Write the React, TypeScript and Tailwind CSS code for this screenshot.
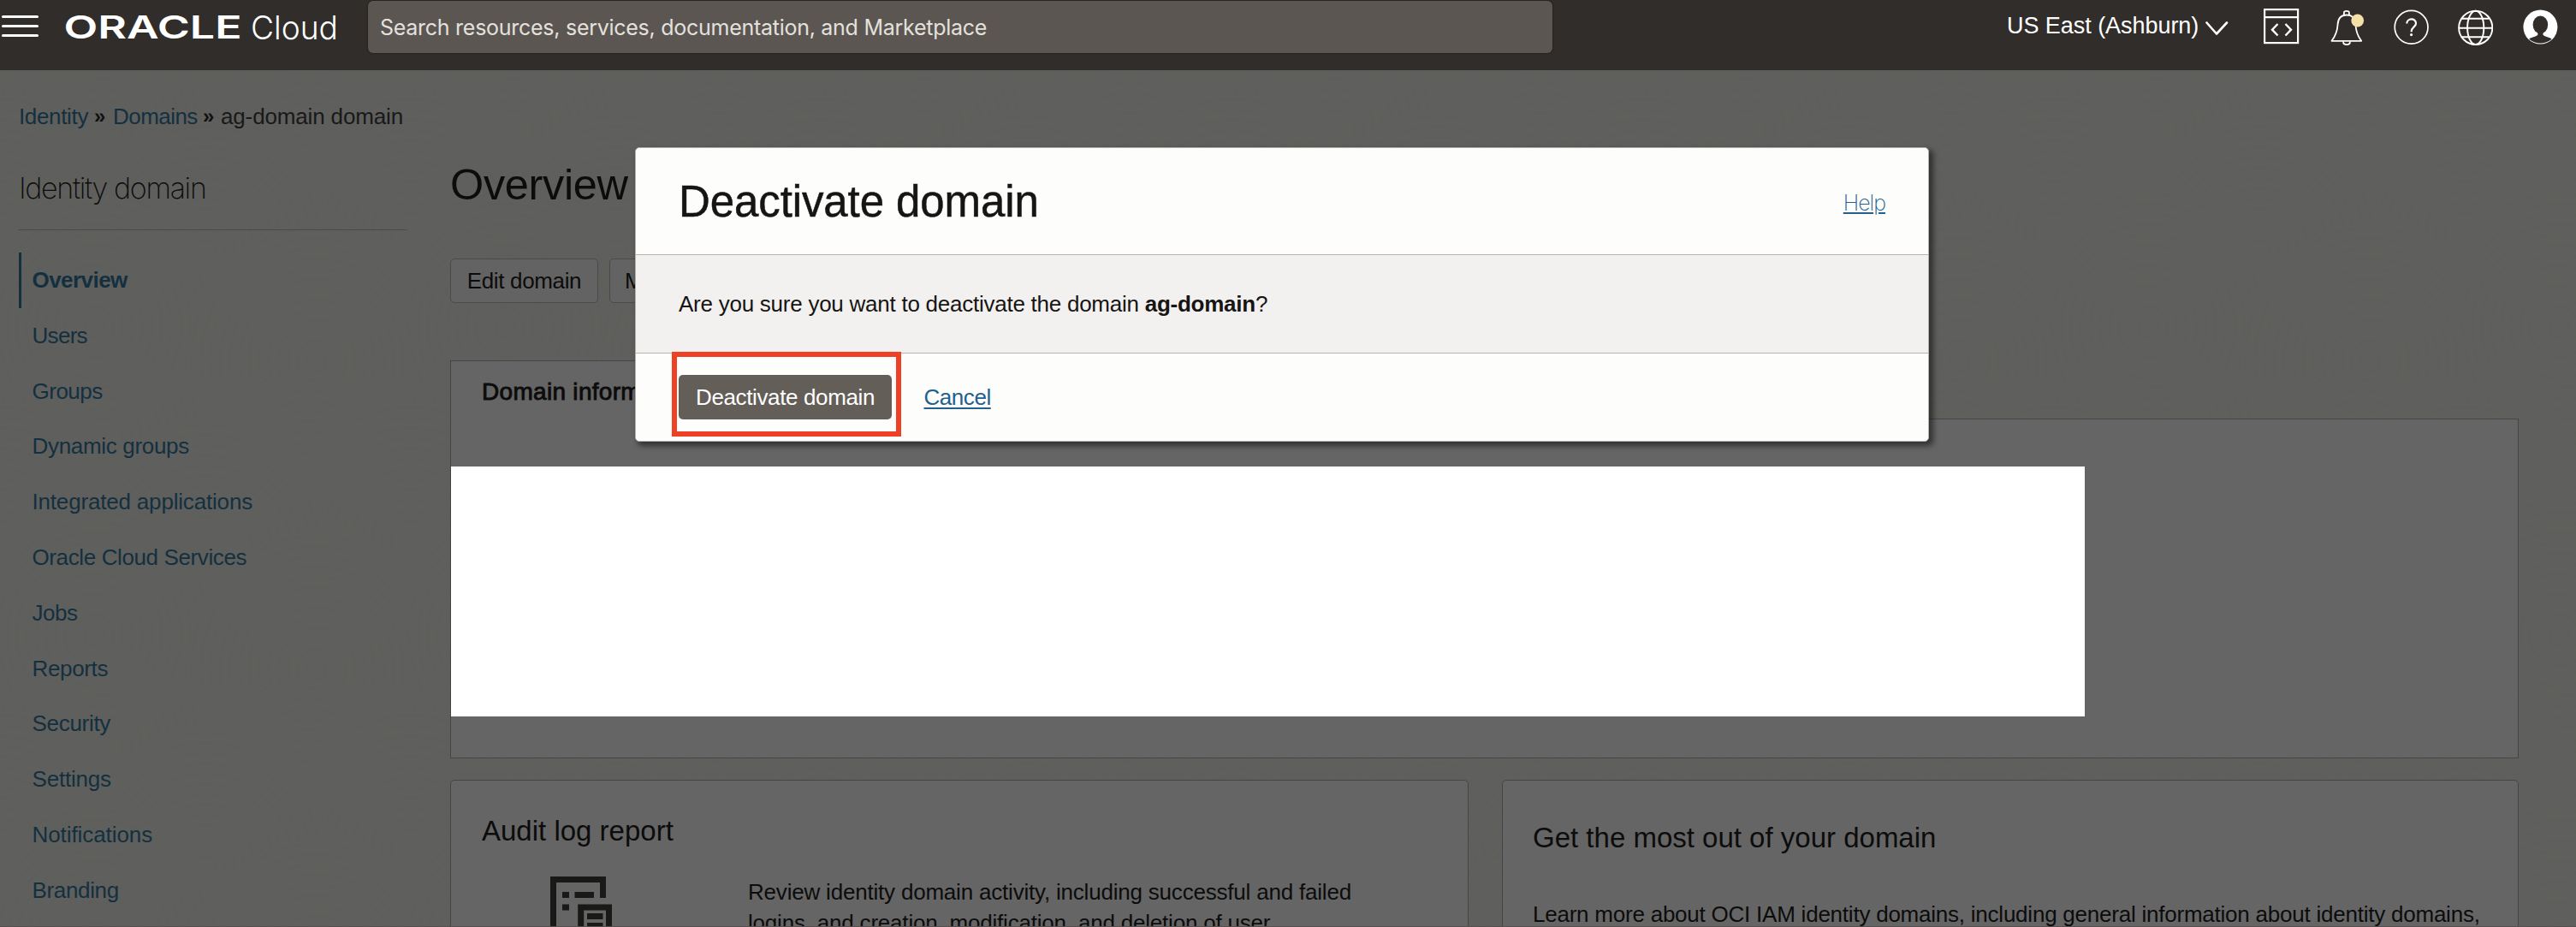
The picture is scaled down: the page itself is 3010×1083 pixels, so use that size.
import React from 'react';

const navItems: { label: string; tracking: string }[] = [
  { label: 'Users', tracking: 'tracking-[-0.7px]' },
  { label: 'Groups', tracking: 'tracking-[-0.5px]' },
  { label: 'Dynamic groups', tracking: 'tracking-[-0.32px]' },
  { label: 'Integrated applications', tracking: 'tracking-[-0.18px]' },
  { label: 'Oracle Cloud Services', tracking: 'tracking-[-0.38px]' },
  { label: 'Jobs', tracking: 'tracking-[-0.5px]' },
  { label: 'Reports', tracking: 'tracking-[-0.35px]' },
  { label: 'Security', tracking: 'tracking-[-0.3px]' },
  { label: 'Settings', tracking: 'tracking-[-0.2px]' },
  { label: 'Notifications', tracking: 'tracking-[-0.08px]' },
  { label: 'Branding', tracking: 'tracking-[-0.35px]' },
];

function Ripple({ cx, cy }: { cx: number; cy: number }) {
  const rings = [12, 24, 36, 48, 60, 72, 84, 96, 108, 120, 132, 144, 156];
  return (
    <g>
      <ellipse cx={cx} cy={cy} rx={150} ry={162} fill="#5f5f5e" />
      {rings.map((r) => (
        <ellipse key={r} cx={cx} cy={cy} rx={r * 0.94} ry={r} fill="none" stroke="#5e5e5b" strokeWidth={3} />
      ))}
    </g>
  );
}

function Texture() {
  return (
    <svg className="absolute inset-0 h-full w-full" aria-hidden="true">
      <defs>
        <pattern id="ripples" width="480" height="360" patternUnits="userSpaceOnUse">
          <rect width="480" height="360" fill="#5f5f5e" />
          <Ripple cx={0} cy={-40} />
          <Ripple cx={480} cy={-40} />
          <Ripple cx={240} cy={-10} />
          <Ripple cx={120} cy={70} />
          <Ripple cx={360} cy={110} />
          <Ripple cx={0} cy={190} />
          <Ripple cx={480} cy={190} />
          <Ripple cx={240} cy={210} />
          <Ripple cx={110} cy={300} />
          <Ripple cx={370} cy={340} />
        </pattern>
      </defs>
      <rect width="100%" height="100%" fill="url(#ripples)" />
    </svg>
  );
}

function Header() {
  return (
    <header className="relative flex h-[82px] shrink-0 bg-[#312d2a] text-white">
      <div className="mt-[18px] ml-[2px] flex h-[25px] w-[43px] flex-col justify-between">
        <span className="h-[3px] rounded-full bg-white" />
        <span className="h-[3px] rounded-full bg-white" />
        <span className="h-[3px] rounded-full bg-white" />
      </div>
      <svg className="ml-[27px] h-[62px] w-[330px]" viewBox="0 0 330 62" fill="#fff">
        <text x="2.5" y="45.3" fontFamily="Inter, sans-serif" fontWeight="600" fontSize="37.5" textLength="208" lengthAdjust="spacingAndGlyphs">
          ORACLE
        </text>
        <text x="221" y="45.5" fontFamily="Inter, sans-serif" fontWeight="300" fontSize="38" textLength="102" lengthAdjust="spacingAndGlyphs">
          Cloud
        </text>
      </svg>
      <div className="mt-[1px] ml-[28px] h-[61px] w-[1384px] rounded-[6px] bg-[#5b5652] pl-[14px] font-[Inter,sans-serif] text-[25px] leading-[62px] tracking-[-0.27px] text-[#e4e1dd] shadow-[0_0_1px_1px_#28231f]">
        Search resources, services, documentation, and Marketplace
      </div>
      <div className="ml-[531px] w-[228px] text-[27px] leading-[60px] tracking-[-0.05px] whitespace-nowrap">
        US East (Ashburn)
      </div>
      <svg className="ml-[4px] h-[62px] w-[30px] shrink-0" viewBox="0 0 30 62" fill="none" stroke="#fff" strokeWidth="2.6">
        <path d="M1.5 26.5 13 39.5 25 26.5" strokeLinecap="round" strokeLinejoin="round" />
      </svg>
      <svg className="ml-[38px] h-[62px] w-[42px] shrink-0" viewBox="0 0 42 62" fill="none" stroke="#fff" strokeWidth="2.2">
        <rect x="1.1" y="11.1" width="39" height="39" />
        <path d="M1 20.2H40" />
        <path d="M16.5 28 10 34.7 16.5 41.5M25.5 28 32 34.7 25.5 41.5" strokeWidth="2.4" />
      </svg>
      <svg className="ml-[34px] h-[62px] w-[44px] shrink-0" viewBox="0 0 44 62" fill="none" stroke="#fff" strokeWidth="1.8" strokeLinejoin="round">
        <path d="M3.5 47.8H38.2C34.5 43 31.8 36 31.4 28.5 30.8 20.5 27.5 17.5 20.9 17.5 14 17.5 11 22 10.6 28.5 10.2 36 7.2 43 3.5 47.8Z" />
        <path d="M17.9 17.5V14.7C17.9 12.2 23.9 12.2 23.9 14.7V17.5" />
        <path d="M17 48.5C17 53.4 25 53.4 25 48.5" />
        <circle cx="33.7" cy="24" r="7.4" fill="#f5e0a8" stroke="none" />
      </svg>
      <svg className="ml-[30px] h-[62px] w-[44px] shrink-0" viewBox="0 0 44 62" fill="none" stroke="#fff" strokeWidth="1.7">
        <circle cx="22.6" cy="31.8" r="19.4" />
        <path d="M17.3 27.5C17.3 20.8 28 20.8 28 27.2 28 31.5 22.6 31.3 22.6 37.2" strokeWidth="2.2" />
        <circle cx="22.6" cy="40.6" r="1.6" fill="#fff" stroke="none" />
      </svg>
      <svg className="ml-[30px] h-[62px] w-[44px] shrink-0" viewBox="0 0 44 62" fill="none" stroke="#fff" strokeWidth="1.9">
        <circle cx="23.7" cy="32.4" r="19.6" />
        <ellipse cx="23.7" cy="32.4" rx="9.6" ry="19.6" />
        <path d="M8 21.7H39.5M4 32.8H43.3M8 43.3H39.5" />
      </svg>
      <svg className="ml-[32px] h-[62px] w-[44px] shrink-0" viewBox="0 0 44 62" fill="none">
        <circle cx="23.4" cy="31.6" r="20" fill="#fff" />
        <ellipse cx="23.4" cy="28.8" rx="8.8" ry="10.4" fill="#312d2a" />
        <path d="M20.4 38V40.5C18 43.3 12.6 43.2 10.2 45.7 17.4 52 29.4 52 36.6 45.7 34.2 43.2 28.8 43.3 26.4 40.5V38Z" fill="#312d2a" />
      </svg>
    </header>
  );
}

function Breadcrumb() {
  return (
    <nav className="ml-[22px] flex h-[36px] text-[26px] leading-[38px] whitespace-nowrap text-[#14303f]">
      <span className="w-[88px] tracking-[-0.35px]">Identity</span>
      <span className="w-[22px] text-[24px] font-bold tracking-[-1px] text-[#111]">»</span>
      <span className="w-[105px] tracking-[-0.55px]">Domains</span>
      <span className="w-[21px] text-[24px] font-bold tracking-[-1px] text-[#111]">»</span>
      <span className="tracking-[-0.15px] text-[#191919]">ag-domain domain</span>
    </nav>
  );
}

function Sidebar() {
  return (
    <aside className="ml-[22px] w-[454px] shrink-0">
      <h2 className="mt-[41px] h-[75px] border-b border-[#4a4a49] font-[Inter,sans-serif] text-[34px] leading-[51px] font-extralight tracking-[-1.35px] whitespace-nowrap text-[#0c0c0c]">
        Identity domain
      </h2>
      <ul className="mt-[26px] text-[26px] text-[#14303f]">
        <li className="h-[64.8px] border-l-[3px] border-[#14303f] pl-[12.5px] leading-[64.8px] font-bold tracking-[-0.55px]">Overview</li>
        {navItems.map((item) => (
          <li key={item.label} className="h-[64.8px] pl-[15.5px] leading-[64.8px]">
            <span className={item.tracking}>{item.label}</span>
          </li>
        ))}
      </ul>
    </aside>
  );
}

function AuditIcon() {
  return (
    <svg className="h-[80px] w-[74px]" viewBox="0 0 74 80" fill="none" stroke="#191917" strokeWidth="7">
      <path d="M3.5 80V3.5H61.5V25" />
      <path d="M14 21.5H22M28.5 21.5H51M14 36H22" />
      <path d="M35.7 80V36H68.5V80" />
      <path d="M43 46.5H61.5M43 57.5H61.5" />
    </svg>
  );
}

function Main() {
  return (
    <main className="ml-[50px] w-[2417px] shrink-0 text-[#0c0c0c]">
      <h1 className="mt-[32px] h-[60px] text-[50.5px] leading-[61px] tracking-[-0.35px]">Overview</h1>
      <div className="mt-[57px] flex gap-[13px] text-[26px] leading-[50px] whitespace-nowrap">
        <button className="h-[52px] w-[173px] rounded-[5px] border border-[#4a4a49] bg-[#636363] tracking-[-0.35px]">Edit domain</button>
        <button className="h-[52px] w-[219px] rounded-[5px] border border-[#4a4a49] bg-[#636363] pl-[17px] text-left">More actions</button>
      </div>
      <div className="mt-[67px]">
        <div className="relative z-10 -mb-px h-[69px] w-[300px] border border-b-0 border-[#454545] bg-[#656565] pl-[36px] text-[28px] leading-[72px] tracking-[0.3px] whitespace-nowrap [-webkit-text-stroke:0.9px_#0c0c0c]">
          Domain information
        </div>
        <div className="h-[397px] border border-[#454545] bg-[#656565] pt-[55px]">
          <div className="h-[292px] w-[1909px] bg-white" />
        </div>
      </div>
      <div className="mt-[25px] flex gap-[39px]">
        <section className="h-[260px] w-[1190px] rounded-[5px] border border-[#454545] bg-[#656565] pl-[36px]">
          <h3 className="mt-[38px] text-[33px] leading-[41px] whitespace-nowrap">Audit log report</h3>
          <div className="mt-[33px] flex">
            <div className="ml-[80px] w-[231px] shrink-0">
              <AuditIcon />
            </div>
            <p className="text-[26px] leading-[36px] tracking-[-0.2px] whitespace-nowrap">
              Review identity domain activity, including successful and failed
              <br />
              logins, and creation, modification, and deletion of user
            </p>
          </div>
        </section>
        <section className="h-[260px] w-[1188px] rounded-[5px] border border-[#454545] bg-[#656565] pl-[35px]">
          <h3 className="mt-[46px] text-[33px] leading-[42px] whitespace-nowrap">Get the most out of your domain</h3>
          <p className="mt-[50px] text-[26px] leading-[36px] tracking-[-0.23px] whitespace-nowrap">
            Learn more about OCI IAM identity domains, including general information about identity domains,
          </p>
        </section>
      </div>
    </main>
  );
}

function DeactivateDialog() {
  return (
    <div
      role="dialog"
      className="absolute top-[172px] left-[742px] z-30 flex h-[344px] w-[1512px] flex-col rounded-[5px] border border-[#b5b0ab] bg-[#fdfdfc] text-[26px] text-[#161513] shadow-[4px_4px_6px_1px_rgba(0,0,0,0.5)]"
    >
      <div className="flex h-[124px] items-center justify-between pr-[50px] pl-[50px]">
        <h2 className="pt-[2px] text-[51px] leading-[60px] tracking-[-0.1px] [-webkit-text-stroke:0.5px_#161513]">Deactivate domain</h2>
        <a className="pt-[3px] font-[Inter,sans-serif] text-[25px] leading-[36px] font-extralight tracking-[-1px] text-[#22608f] underline decoration-[#22608f] decoration-2 underline-offset-[2px]">Help</a>
      </div>
      <div className="h-[116px] border-y border-[#b9b3ae] bg-[#f3f1f0] pl-[50px] leading-[114px] tracking-[-0.25px] whitespace-nowrap">
        Are you sure you want to deactivate the domain <b>ag-domain</b>?
      </div>
      <div className="flex pt-[25px] pl-[50px] leading-[52px]">
        <button className="h-[52px] w-[249px] rounded-[5px] bg-[#645e59] tracking-[-0.37px] whitespace-nowrap text-white">Deactivate domain</button>
        <a className="ml-[37.5px] tracking-[-0.45px] text-[#22608f] underline decoration-2 underline-offset-[3px]">Cancel</a>
      </div>
      <div className="absolute top-[238px] left-[42px] h-[99px] w-[268px] border-[6px] border-[#ee4024]" />
    </div>
  );
}

export default function App() {
  return (
    <div className="relative flex h-[1083px] w-[3010px] flex-col overflow-hidden bg-[#5f5f5e] font-['Liberation_Sans',Arial,sans-serif]">
      <Header />
      <div className="relative h-[1001px] overflow-hidden pt-[35px]">
        <Texture />
        <div className="relative">
          <Breadcrumb />
          <div className="flex">
            <Sidebar />
            <Main />
          </div>
        </div>
        <div className="absolute bottom-0 left-0 h-px w-full bg-[#564f50]" />
      </div>
      <DeactivateDialog />
    </div>
  );
}
